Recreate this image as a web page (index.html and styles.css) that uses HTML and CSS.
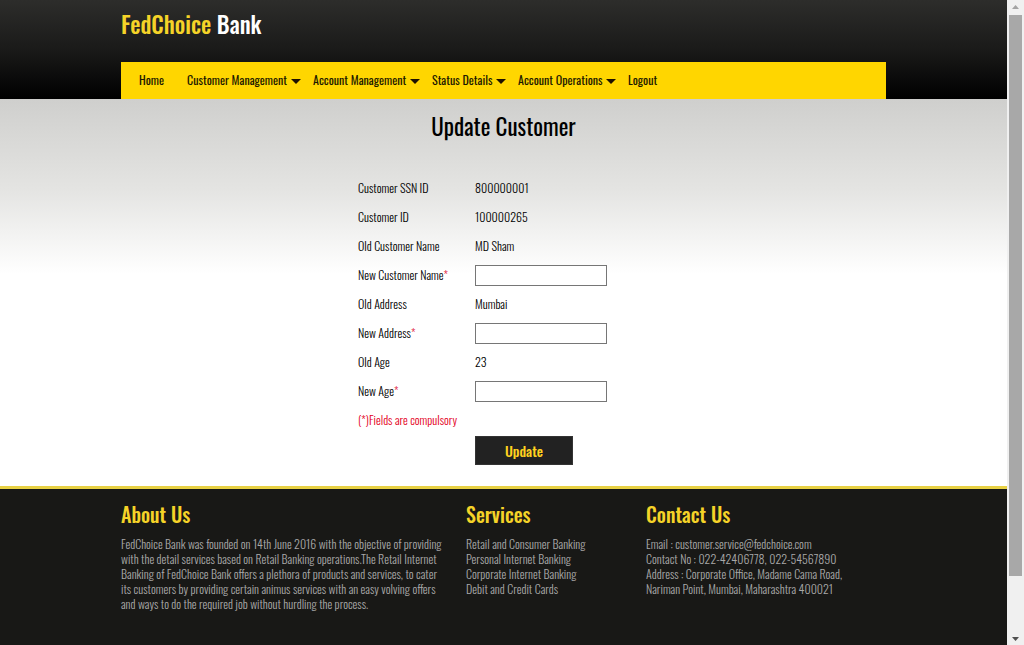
FILE: index.html
```html
<!DOCTYPE html>
<html lang="en">
<head>
<meta charset="utf-8">
<title>FedChoice Bank - Update Customer</title>
<link rel="stylesheet" href="styles.css">
</head>
<body>
<div class="page">
  <header class="header">
    <div class="container">
      <h1 class="logo"><span class="logo-accent">FedChoice</span> Bank</h1>
      <nav class="nav">
        <a href="#">Home</a>
        <a href="#">Customer Management<span class="caret"></span></a>
        <a href="#">Account Management<span class="caret"></span></a>
        <a href="#">Status Details<span class="caret"></span></a>
        <a href="#">Account Operations<span class="caret"></span></a>
        <a href="#">Logout</a>
      </nav>
    </div>
  </header>
  <main class="main">
    <h2 class="title">Update Customer</h2>
    <form class="form">
      <span>Customer SSN ID</span><span>800000001</span>
      <span>Customer ID</span><span>100000265</span>
      <span>Old Customer Name</span><span>MD Sham</span>
      <label for="name">New Customer Name<span class="required">*</span></label><input class="field" id="name" type="text">
      <span>Old Address</span><span>Mumbai</span>
      <label for="address">New Address<span class="required">*</span></label><input class="field" id="address" type="text">
      <span>Old Age</span><span>23</span>
      <label for="age">New Age<span class="required">*</span></label><input class="field" id="age" type="text">
      <span class="note">(*)Fields are compulsory</span>
      <button class="submit" type="submit">Update</button>
    </form>
  </main>
  <footer class="footer">
    <div class="container footer-columns">
      <section>
        <h3 class="footer-title">About Us</h3>
        <p class="footer-text">FedChoice Bank was founded on 14th June 2016 with the objective of providing<br>with the detail services based on Retail Banking operations.The Retail Internet<br>Banking of FedChoice Bank offers a plethora of products and services, to cater<br>its customers by providing certain animus services with an easy volving offers<br>and ways to do the required job without hurdling the process.</p>
      </section>
      <section>
        <h3 class="footer-title">Services</h3>
        <p class="footer-text">Retail and Consumer Banking<br>Personal Internet Banking<br>Corporate Internet Banking<br>Debit and Credit Cards</p>
      </section>
      <section>
        <h3 class="footer-title">Contact Us</h3>
        <p class="footer-text">Email : customer.service@fedchoice.com<br>Contact No : 022-42406778, 022-54567890<br>Address : Corporate Office, Madame Cama Road,<br>Nariman Point, Mumbai, Maharashtra 400021</p>
      </section>
    </div>
  </footer>
</div>
<div class="scrollbar" aria-hidden="true">
  <svg width="7" height="4" viewBox="0 0 7 4"><path d="M0 4L3.500 0L7 4Z" fill="#a3a3a3"/></svg>
  <div class="track"><div class="thumb"></div></div>
  <svg width="7" height="4" viewBox="0 0 7 4"><path d="M0 0H7L3.500 4Z" fill="#505050"/></svg>
</div>
</body>
</html>
```
FILE: styles.css
```css
* { box-sizing: border-box; }
body {
  margin: 0;
  min-height: 100vh;
  display: grid;
  grid-template-columns: minmax(0, 1fr) 17px;
  font-family: Oswald, "Roboto Condensed", "Liberation Sans Narrow", "Arial Narrow", "Liberation Sans", sans-serif;
  font-size: 12px;
  line-height: 15px;
  color: #000;
}
h1, h2, h3, p { margin: 0; font-weight: 400; white-space: nowrap; }
.page { display: flex; flex-direction: column; }
.container { width: 100%; max-width: 765px; margin: 0 auto; }
.header { background: linear-gradient(#2d2d2b, #1a1a19 50%, #000); }
.logo {
  height: 62px;
  padding-top: 6px;
  font-size: 23px;
  line-height: 36px;
  font-weight: 500;
  color: #fff;
}
.logo-accent { color: #f5d328; }
.nav {
  display: grid;
  grid-template-columns: 36px 114px 107px 74px 98px auto;
  column-gap: 12px;
  align-items: center;
  height: 37px;
  padding: 0 0 2px 18px;
  background: #ffd600;
}
.nav a {
  display: flex;
  align-items: center;
  justify-content: space-between;
  color: #1d1a00;
  text-decoration: none;
  white-space: nowrap;
}
.caret {
  margin-top: 3px;
  border: 5px solid transparent;
  border-top-color: #1d1000;
  border-bottom: 0;
}
.main {
  padding: 9px 0 21px;
  background: linear-gradient(#cfcfcd, #e4e4e2 90px, #fff 175px);
}
.title { font-size: 23px; line-height: 36px; text-align: center; }
.form {
  display: grid;
  grid-template-columns: 117px 132px;
  grid-auto-rows: 29px;
  align-items: center;
  width: 291px;
  margin: 29px auto 0;
  padding-bottom: 2px;
  font-weight: 300;
  white-space: nowrap;
}
.field {
  width: 132px;
  height: 21px;
  margin-top: 2px;
  padding: 1px 4px;
  border: 1px solid #767676;
  background: #fff;
  font: inherit;
}
.required { color: #e0203a; }
.note { grid-column: 1 / -1; color: #e3001b; }
.submit {
  grid-column: 2;
  width: 98px;
  height: 29px;
  margin-top: 4px;
  padding: 0;
  border: 1px solid #333;
  background: #222;
  color: #ffd21f;
  font: inherit;
  font-size: 14px;
  font-weight: 500;
}
.footer {
  flex: 1;
  padding: 11px 0 32px;
  border-top: 3px solid #e8d144;
  background: #181816;
  color: #a8a8a8;
}
.footer-columns { display: grid; grid-template-columns: 345px 180px 1fr; }
.footer-title { font-size: 20px; line-height: 28px; margin-bottom: 8px; font-weight: 500; color: #f5d328; }
.footer-text { font-weight: 300; }
.scrollbar {
  display: flex;
  flex-direction: column;
  align-items: center;
  padding: 5px 0 4px;
  background: #f0f0f0;
}
.track { flex: 1; width: 13px; margin: 6px 0; }
.thumb { height: 91%; background: #a8a8a8; }
```
